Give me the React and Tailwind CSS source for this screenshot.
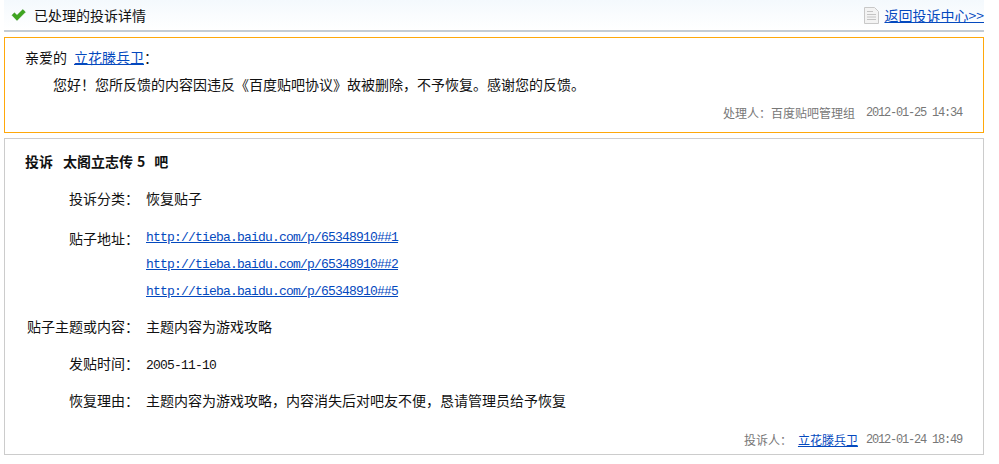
const cjk = 'font-["SimSun","Noto_Sans_CJK_SC",sans-serif]';
const mono = 'font-["Liberation_Mono","Noto_Sans_CJK_SC",monospace]';

const CheckIcon = () => (
  <svg width="15" height="12" viewBox="0 0 15 12" className="mr-2 shrink-0">
    <path d="M1 6.2 L3.4 3.8 L6 6.3 L11.8 0.6 L14.4 3 L6 11.4 Z" fill="#3fa61f" stroke="#2f8a16" strokeWidth="0.5" />
  </svg>
);

const DocIcon = () => (
  <svg width="15" height="17" viewBox="0 0 15 17" className="mr-[5px] shrink-0">
    <path d="M0.5 0.5 H10.5 L14.5 4.5 V16.5 H0.5 Z" fill="#f3f3f3" stroke="#c8c8c8" />
    <path d="M3 4.5 H9 M3 7.5 H12 M3 10 H12 M3 12.5 H12" stroke="#c4c4c4" />
  </svg>
);

const Row = ({ label, className, children }) => (
  <div className={`grid grid-cols-[141px_1fr] text-[14px] leading-[20px] text-[#111] ${className}`}>
    <div className="pr-[7px] text-right whitespace-nowrap">{label}：</div>
    <div>{children}</div>
  </div>
);

const urls = [
  'http://tieba.baidu.com/p/65348910##1',
  'http://tieba.baidu.com/p/65348910##2',
  'http://tieba.baidu.com/p/65348910##5',
];

const App = () => {
  return (
    <div className={`w-[999px] h-[464px] bg-white ${cjk}`}>
      <div className="ml-1 w-[980px]">
        <div className="flex h-8 items-center justify-between border-b-2 border-[#c4ccd4] bg-gradient-to-b from-[#f4f9fd] to-white pl-[7px] text-[14px]">
          <div className="flex items-center text-[#111]">
            <CheckIcon />
            <span>已处理的投诉详情</span>
          </div>
          <div className="flex items-center">
            <DocIcon />
            <a href="#" className="text-[#0449be] underline">返回投诉中心&gt;&gt;</a>
          </div>
        </div>

        <div className="mt-[5px] h-[96px] border border-[#ffa80a] px-5 pt-[9px]">
          <div className="text-[14px] leading-[20px] text-[#111]">
            亲爱的
            <a href="#" className="ml-[7px] text-[#0449be] underline">立花滕兵卫</a>：
          </div>
          <div className="mt-[7px] pl-7 text-[14px] leading-[20px] text-[#111]">
            您好！您所反馈的内容因违反《百度贴吧协议》故被删除，不予恢复。感谢您的反馈。
          </div>
          <div className="mt-[11px] flex items-center justify-end pr-px text-[12px] leading-[16px] text-[#777]">
            <span>处理人：百度贴吧管理组</span>
            <span className={`ml-[11px] tracking-[-1.2px] ${mono}`}>2012-01-25 14:34</span>
          </div>
        </div>

        <div className="mt-[5px] h-[317px] border border-[#cccccc] pt-3">
          <div className="pl-5 text-[14px] font-bold leading-[20px] text-[#111]">
            投诉
            <span className="ml-[10px]">太阁立志传</span>
            <span className="ml-1">5</span>
            <span className="ml-[9px]">吧</span>
          </div>
          <Row label="投诉分类" className="mt-[17px]">恢复贴子</Row>
          <Row label="贴子地址" className="mt-5">
            <div className="flex flex-col gap-[7px]">
              {urls.map((url) => (
                <a key={url} href="#" className={`text-[13px] tracking-[-0.8px] text-[#0449be] underline ${mono}`}>
                  {url}
                </a>
              ))}
            </div>
          </Row>
          <Row label="贴子主题或内容" className="mt-[14px]">主题内容为游戏攻略</Row>
          <Row label="发贴时间" className="mt-[17px]">
            <span className={`text-[13px] tracking-[-0.8px] ${mono}`}>2005-11-10</span>
          </Row>
          <Row label="恢复理由" className="mt-[14px]">
            主题内容为游戏攻略，内容消失后对吧友不便，恳请管理员给予恢复
          </Row>
          <div className="mt-[22px] flex items-center justify-end pr-[21px] text-[12px] leading-[16px] text-[#777]">
            <span>投诉人：</span>
            <a href="#" className="ml-[6px] text-[#0449be] underline">立花滕兵卫</a>
            <span className={`ml-2 tracking-[-1.2px] ${mono}`}>2012-01-24 18:49</span>
          </div>
        </div>
      </div>
    </div>
  );
};

export default App;
